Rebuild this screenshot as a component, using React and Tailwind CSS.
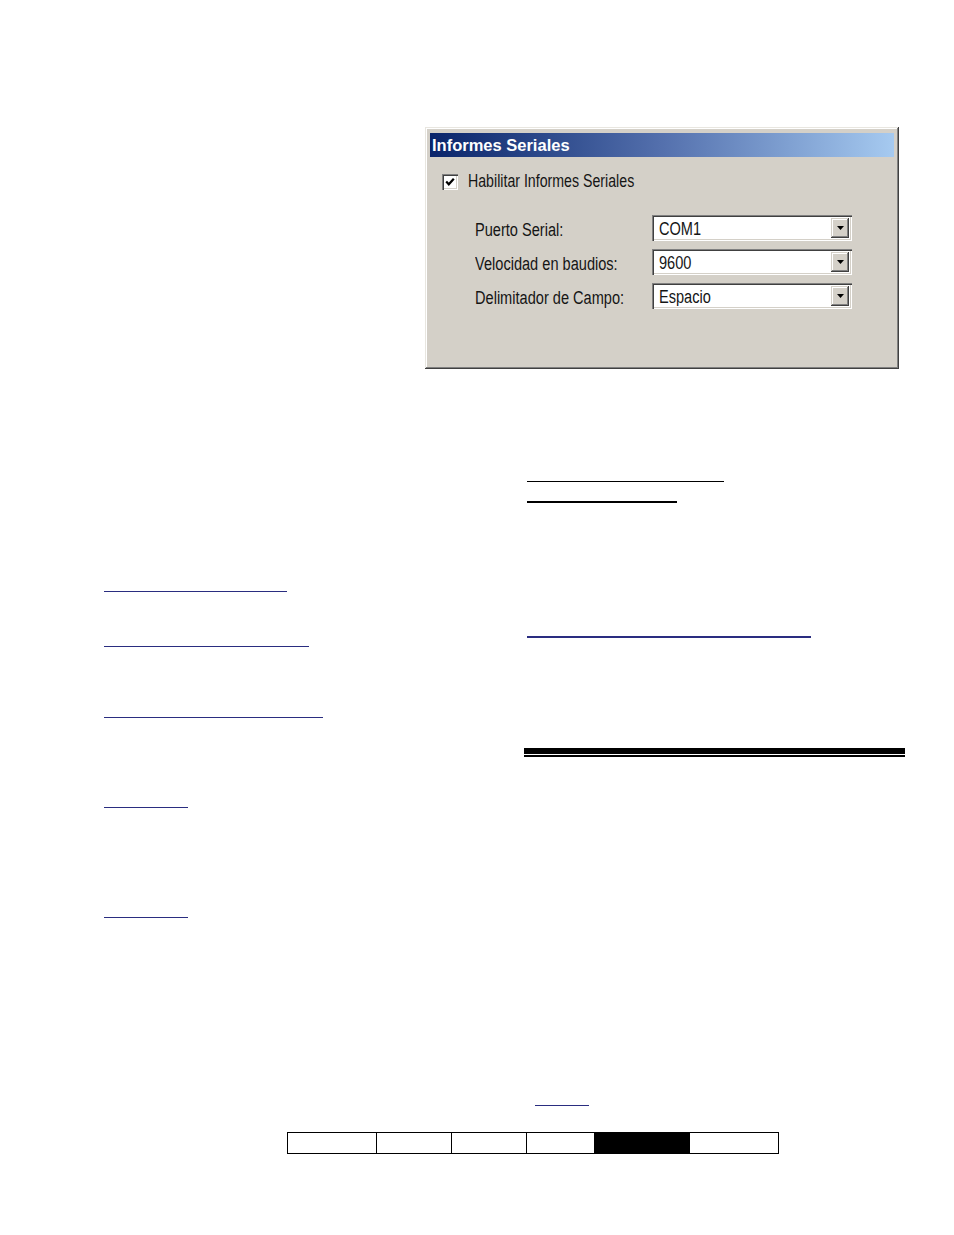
import React from 'react';

const sans = { fontFamily: '"Liberation Sans", Arial, sans-serif' };

// the dialog text is a tall, narrow face: Liberation Sans squeezed horizontally
function Narrow({ children, size = 'text-[18px]' }) {
  return (
    <span className={`block whitespace-nowrap origin-left scale-x-[0.81] leading-none text-[#151515] ${size}`} style={sans}>
      {children}
    </span>
  );
}

function Combo({ value }) {
  return (
    <div className="flex items-center w-[200px] h-[26px] bg-white shadow-[inset_1px_1px_#808080,inset_2px_2px_#404040,inset_-1px_-1px_#ffffff,inset_-2px_-2px_#d4d0c8]">
      <div className="flex-1 flex items-center pl-[7px] pt-[1px] overflow-hidden">
        <Narrow>{value}</Narrow>
      </div>
      <div className="flex items-center justify-center w-[18px] h-[20px] mr-[3px] bg-[#d4d0c8] shadow-[inset_-1px_-1px_#404040,inset_1px_1px_#d4d0c8,inset_-2px_-2px_#808080,inset_2px_2px_#ffffff]">
        <svg width="7" height="4" viewBox="0 0 7 4">
          <path d="M0 0h7L3.5 4z" fill="#000" />
        </svg>
      </div>
    </div>
  );
}

function Row({ label, value }) {
  return (
    <div className="flex items-center">
      <div className="w-[177px] flex items-center pt-[3px]">
        <Narrow>{label}</Narrow>
      </div>
      <Combo value={value} />
    </div>
  );
}

export default function App() {
  return (
    <div className="w-[954px] h-[1235px] bg-white flex flex-col">
      {/* dialog */}
      <div className="mt-[127px] ml-[425px] w-[474px] h-[242px] bg-[#d4d0c8] pt-[6px] px-[5px] shadow-[inset_-1px_-1px_#404040,inset_1px_1px_#e8e6e0,inset_-2px_-2px_#808080,inset_2px_2px_#ffffff]">
        <div className="h-[24px] flex items-center pl-[2px] bg-gradient-to-r from-[#0a246a] via-[#5470ad] to-[#a6caf0]">
          <span className="text-white font-bold text-[16.5px] leading-none" style={sans}>
            Informes Seriales
          </span>
        </div>
        <div className="flex items-center h-[17px] mt-[16px] ml-[12px] gap-[10px]">
          <div className="w-[16px] h-[16px] bg-white flex items-center justify-center shadow-[inset_1px_1px_#808080,inset_2px_2px_#404040,inset_-1px_-1px_#ffffff,inset_-2px_-2px_#d4d0c8]">
            <svg width="10" height="10" viewBox="0 0 10 10">
              <path d="M1.2 4.6l2.6 2.7L8.8 1.8" stroke="#000" strokeWidth="2.2" fill="none" />
            </svg>
          </div>
          <div className="flex items-center">
            <Narrow size="text-[17.5px]">Habilitar Informes Seriales</Narrow>
          </div>
        </div>
        <div className="flex flex-col gap-[8px] mt-[25px] ml-[45px]">
          <Row label="Puerto Serial:" value="COM1" />
          <Row label="Velocidad en baudios:" value="9600" />
          <Row label="Delimitador de Campo:" value="Espacio" />
        </div>
      </div>

      {/* body columns */}
      <div className="flex">
        <div className="w-[524px] pl-[104px] flex flex-col">
          <div className="mt-[222px] w-[183px] h-[1px] bg-[#2a2d80]" />
          <div className="mt-[54px] w-[205px] h-[1px] bg-[#2a2d80]" />
          <div className="mt-[70px] w-[219px] h-[1px] bg-[#2a2d80]" />
          <div className="mt-[89px] w-[84px] h-[1px] bg-[#2a2d80]" />
          <div className="mt-[109px] w-[84px] h-[1px] bg-[#2a2d80]" />
        </div>
        <div className="flex flex-col">
          <div className="mt-[112px] ml-[3px] w-[197px] h-[1px] bg-black" />
          <div className="mt-[19px] ml-[3px] w-[150px] h-[2px] bg-black" />
          <div className="mt-[133px] ml-[3px] w-[284px] h-[2px] bg-[#2a2d80]" />
          <div className="mt-[110px] w-[381px] h-[6px] bg-black" />
          <div className="mt-[1px] w-[381px] h-[2px] bg-black" />
        </div>
      </div>

      {/* footer */}
      <div className="mt-[187px] ml-[535px] w-[54px] h-[1px] bg-[#2a2d80]" />
      <div className="mt-[26px] ml-[287px] w-[492px] h-[22px] flex border border-black">
        <div className="w-[88px]" />
        <div className="w-[75px] border-l border-black" />
        <div className="w-[75px] border-l border-black" />
        <div className="w-[68px] border-l border-black" />
        <div className="w-[96px] bg-black" />
        <div className="flex-1" />
      </div>
    </div>
  );
}
